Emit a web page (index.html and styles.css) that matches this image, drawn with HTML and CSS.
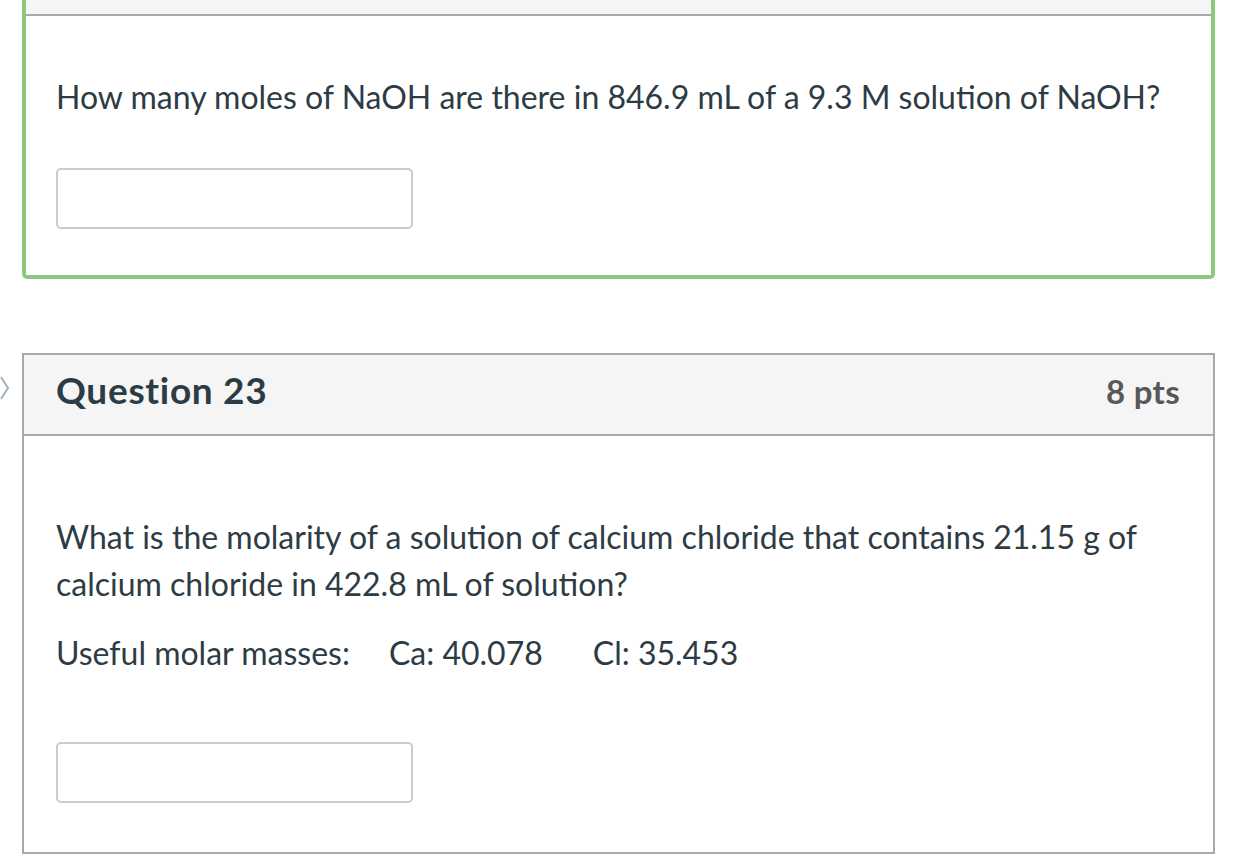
FILE: index.html
```html
<!DOCTYPE html>
<html>
<head>
<meta charset="utf-8">
<link rel="stylesheet" href="styles.css">
</head>
<body>
<div class="page">
  <div class="card card-correct">
    <div class="card-header-stub"></div>
    <div class="card-body body-first">
      <p class="qtext">How many moles of NaOH are there in 846.9 mL of a 9.3 M solution of NaOH?</p>
      <div class="answer-input"></div>
    </div>
  </div>

  <div class="card card-plain">
    <svg class="nav-chevron" width="10" height="26" viewBox="0 0 10 26"><path d="M1 2 L8 13 L1 24" fill="none" stroke="#9fb3c4" stroke-width="2"/></svg>
    <div class="card-header">
      <span class="q-title">Question 23</span>
      <span class="q-points">8 pts</span>
    </div>
    <div class="card-body body-second">
      <p class="qtext">What is the molarity of a solution of calcium chloride that contains 21.15 g of calcium chloride in 422.8 mL of solution?</p>
      <p class="qtext masses"><span>Useful molar masses:</span><span class="mass-ca">Ca: 40.078</span><span class="mass-cl">Cl: 35.453</span></p>
      <div class="answer-input"></div>
    </div>
  </div>
</div>
</body>
</html>
```

FILE: styles.css
```css
html, body {
  margin: 0;
  padding: 0;
  background: #ffffff;
}
body {
  font-family: Lato, "Open Sans", sans-serif;
  color: #2d3b45;
  overflow: hidden;
}
.page {
  width: 1236px;
  height: 864px;
  display: flex;
  flex-direction: column;
}
.card {
  margin-left: 22px;
  width: 1193px;
  box-sizing: border-box;
  background: #fff;
  position: relative;
}
.card-correct {
  border: 4px solid #8fc77c;
  border-top: none;
  border-radius: 0 0 5px 5px;
}
.card-plain {
  margin-top: 74px;
  border: 2px solid #a9a9a9;
}
.card-header-stub {
  height: 14px;
  background: #f5f5f5;
  border-bottom: 2px solid #a9a9a9;
}
.card-header {
  height: 81px;
  box-sizing: border-box;
  background: #f5f5f5;
  border-bottom: 2px solid #a9a9a9;
  display: flex;
  justify-content: space-between;
  align-items: baseline;
  padding: 13px 33px 0 32px;
  line-height: 1.2;
}
.q-title {
  font-size: 37px;
  font-weight: 700;
  letter-spacing: 0.7px;
  color: #2d3b45;
}
.q-points {
  font-size: 33px;
  font-weight: 700;
  letter-spacing: 0.3px;
  color: #585858;
}
.card-body {
  padding-left: 30px;
  padding-right: 31px;
}
.card-plain .card-body {
  padding-left: 32px;
}
.body-first {
  padding-top: 57px;
  padding-bottom: 46px;
}
.body-second {
  padding-top: 77px;
  padding-bottom: 49px;
}
.qtext {
  margin: 0;
  font-size: 32px;
  line-height: 47px;
}
.masses {
  margin-top: 22px;
}
.mass-ca {
  margin-left: 39px;
}
.mass-cl {
  margin-left: 50px;
}
.answer-input {
  width: 357px;
  height: 61px;
  box-sizing: border-box;
  border: 2px solid #cccccc;
  border-radius: 5px;
  background: #fff;
}
.body-first .answer-input {
  margin-top: 48px;
}
.body-second .answer-input {
  margin-top: 66px;
}
.nav-chevron {
  position: absolute;
  left: -24px;
  top: 20px;
}
```
